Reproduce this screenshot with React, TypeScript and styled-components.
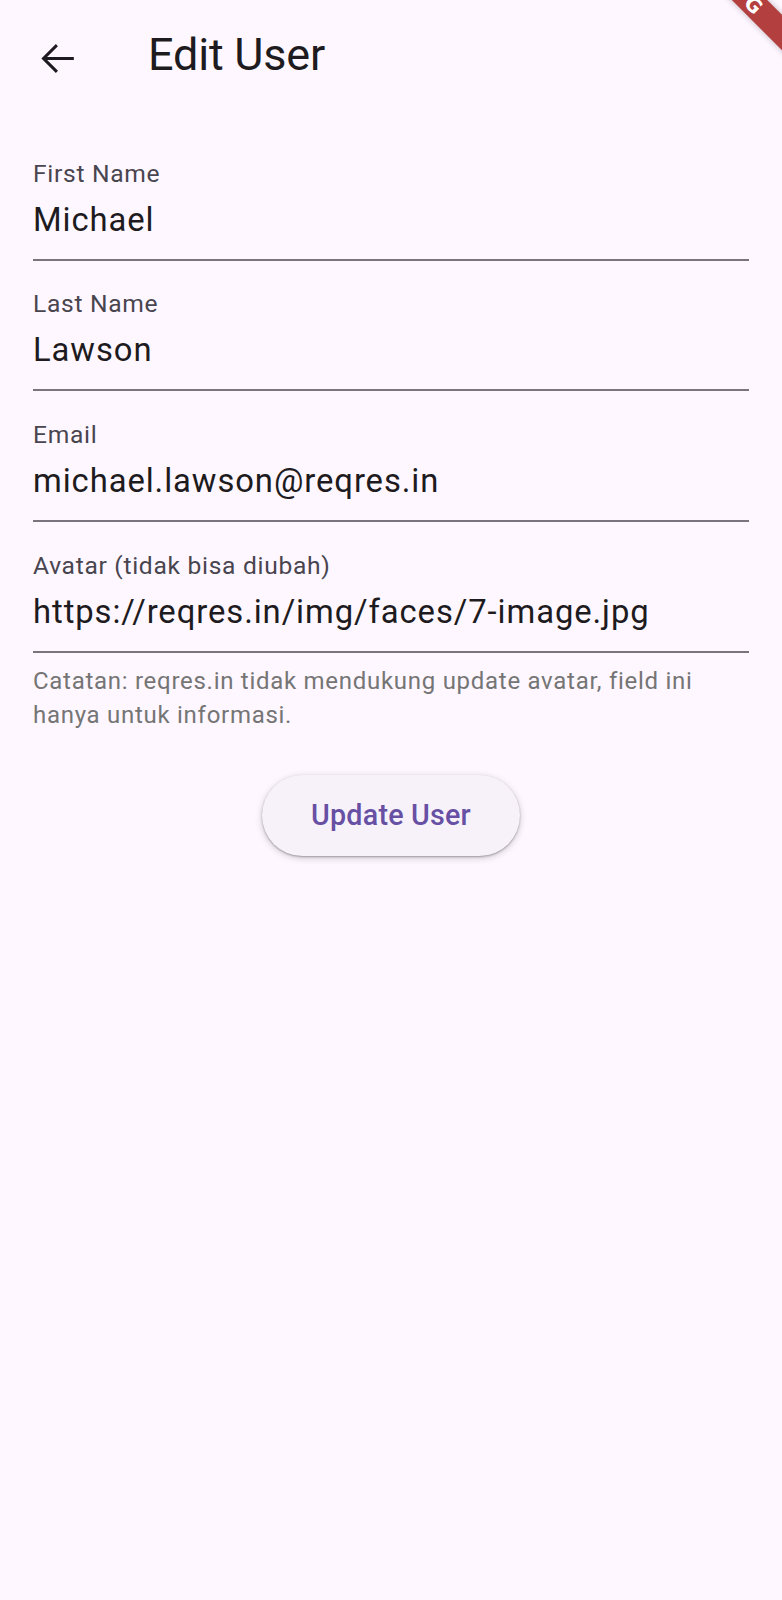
import React from "react";
import styled, { createGlobalStyle } from "styled-components";

const GlobalStyle = createGlobalStyle`
  html, body {
    margin: 0;
    padding: 0;
    background: #fef7ff;
  }
  body {
    font-family: Roboto, "Noto Sans", "Liberation Sans", sans-serif;
    -webkit-font-smoothing: antialiased;
  }
`;

const Screen = styled.div`
  position: relative;
  width: 782px;
  min-height: 1600px;
  background: #fef7ff;
  overflow: hidden;
`;

const AppBar = styled.header`
  display: flex;
  align-items: center;
  height: 114px;
`;

const Leading = styled.div`
  display: flex;
  align-items: center;
  justify-content: center;
  width: 115px;
  height: 100%;
  padding-top: 2px;
  box-sizing: border-box;
`;

const BackButton = styled.button`
  display: flex;
  align-items: center;
  justify-content: center;
  width: 98px;
  height: 98px;
  padding: 0;
  border: none;
  border-radius: 50%;
  background: transparent;
  color: #1d1b20;
  cursor: pointer;
`;

const Title = styled.h1`
  margin: 0 0 0 33px;
  padding-bottom: 4px;
  font-family: Roboto, "Noto Sans", sans-serif;
  font-weight: 400;
  font-size: 45px;
  line-height: 52px;
  letter-spacing: -0.2px;
  color: #1d1b20;
`;

const Body = styled.main`
  display: flex;
  flex-direction: column;
  padding: 43.6px 33px 0;
`;

const Field = styled.div<{ $gap?: number }>`
  display: flex;
  flex-direction: column;
  padding-bottom: 17px;
  border-bottom: 2px solid #79747e;
  margin-bottom: ${(p) => (p.$gap ?? 0)}px;
`;

const Label = styled.label`
  font-family: Roboto, "Noto Sans", sans-serif;
  font-size: 24.6px;
  line-height: 32px;
  letter-spacing: 0.7px;
  color: #49454f;
  margin-bottom: 8px;
`;

const Value = styled.div`
  font-family: Roboto, "Noto Sans", sans-serif;
  font-size: 32.8px;
  line-height: 44px;
  letter-spacing: 0.92px;
  color: #1d1b20;
  white-space: nowrap;
`;

const Note = styled.p`
  margin: 12.8px 0 0;
  font-family: Roboto, "Noto Sans", sans-serif;
  font-size: 24px;
  line-height: 33.3px;
  letter-spacing: 0.72px;
  color: #757575;
`;

const ButtonRow = styled.div`
  display: flex;
  justify-content: center;
  margin-top: 42.5px;
`;

const UpdateButton = styled.button`
  height: 81px;
  padding: 0 49px;
  border: none;
  border-radius: 41px;
  background: #f7f2fa;
  box-shadow: 0 1px 2px rgba(0, 0, 0, 0.3), 0 2px 6px 1px rgba(0, 0, 0, 0.15);
  font-family: Roboto, "Noto Sans", sans-serif;
  font-weight: 500;
  font-size: 28.7px;
  letter-spacing: 0.2px;
  color: #6750a4;
  cursor: pointer;
`;

const DebugBanner = styled.div`
  position: absolute;
  left: 631px;
  top: -31px;
  width: 200px;
  height: 25px;
  transform: rotate(45deg);
  background: #b3403f;
  box-shadow: 0 0 6px rgba(0, 0, 0, 0.25);
  display: flex;
  align-items: center;
  justify-content: center;
  font-family: "DejaVu Sans", "Liberation Sans", sans-serif;
  font-weight: 900;
  font-size: 20px;
  letter-spacing: 1px;
  color: #ffffff;
`;

const ArrowBack = () => (
  <svg width="49" height="49" viewBox="0 0 24 24" fill="currentColor" aria-hidden="true">
    <path d="M20 11.25H6.9l5.3-5.3L11.2 4.9 4.1 12l7.1 7.1 1.05-1.05-5.3-5.3H20z" />
  </svg>
);

const fields = [
  { label: "First Name", value: "Michael" },
  { label: "Last Name", value: "Lawson" },
  { label: "Email", value: "michael.lawson@reqres.in" },
  { label: "Avatar (tidak bisa diubah)", value: "https://reqres.in/img/faces/7-image.jpg" },
];

export default function App() {
  return (
    <>
      <GlobalStyle />
      <Screen>
        <AppBar>
          <Leading>
            <BackButton aria-label="Back">
              <ArrowBack />
            </BackButton>
          </Leading>
          <Title>Edit User</Title>
        </AppBar>
        <Body>
          {fields.map((f, i) => (
            <Field key={f.label} $gap={i < fields.length - 1 ? 27.7 : 0}>
              <Label>{f.label}</Label>
              <Value>{f.value}</Value>
            </Field>
          ))}
          <Note>
            Catatan: reqres.in tidak mendukung update avatar, field ini hanya untuk informasi.
          </Note>
          <ButtonRow>
            <UpdateButton>Update User</UpdateButton>
          </ButtonRow>
        </Body>
        <DebugBanner>DEBUG</DebugBanner>
      </Screen>
    </>
  );
}
